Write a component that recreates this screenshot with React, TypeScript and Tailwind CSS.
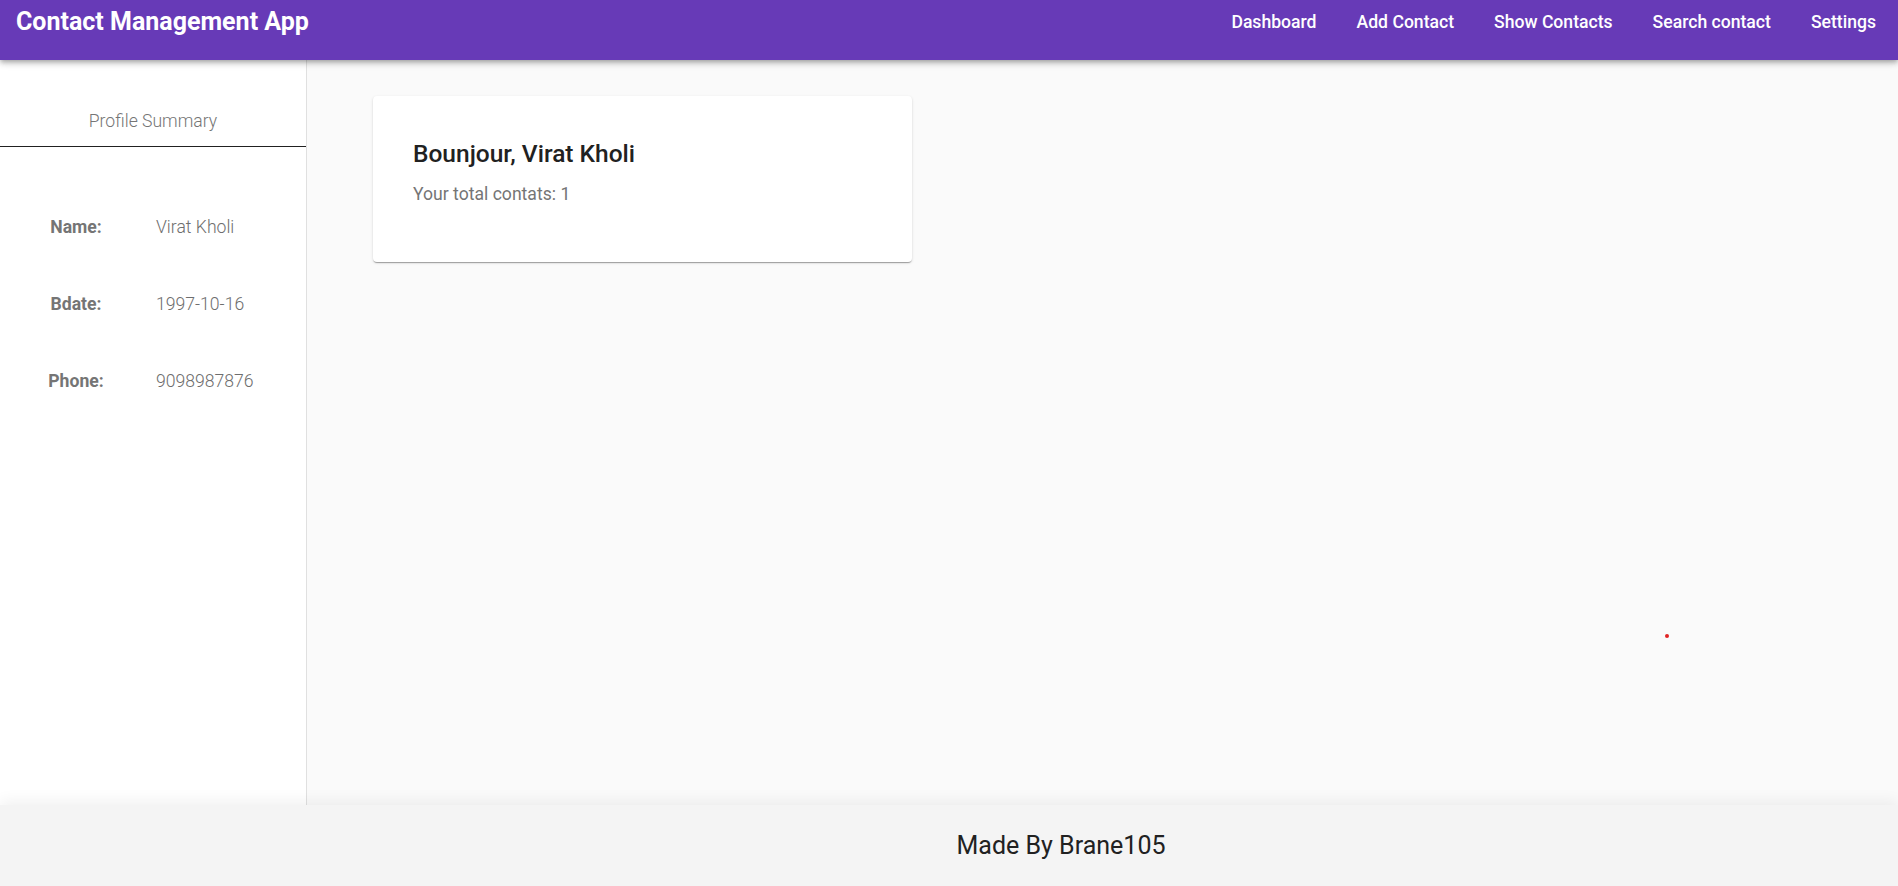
import React from "react";

const navItems = ["Dashboard", "Add Contact", "Show Contacts", "Search contact", "Settings"];

const rows: [string, string][] = [
  ["Name:", "Virat Kholi"],
  ["Bdate:", "1997-10-16"],
  ["Phone:", "9098987876"],
];

export default function App() {
  return (
    <div
      className="relative flex h-[886px] w-full flex-col overflow-hidden bg-[#fafafa]"
      style={{ fontFamily: "Roboto, 'Noto Sans', Arial, sans-serif" }}
    >
      <header className="relative z-20 flex h-[60px] shrink-0 items-start justify-between bg-[#673ab7] shadow-[0_2px_4px_-1px_rgba(0,0,0,0.2),0_4px_5px_0_rgba(0,0,0,0.14),0_1px_10px_0_rgba(0,0,0,0.12)]">
        <h1 className="pl-4 pt-[7px] text-[25px] font-bold leading-[30px] text-white">
          Contact Management App
        </h1>
        <nav className="flex gap-[40px] pr-[22px] pt-[10px]">
          {navItems.map((n) => (
            <a key={n} className="text-[17.6px] font-medium leading-[24px] text-white">
              {n}
            </a>
          ))}
        </nav>
      </header>

      <div className="flex min-h-0 flex-1">
        <aside className="w-[307px] shrink-0 border-r border-[#e0e0e0] bg-white">
          <div className="border-b border-[#212121] pb-[13px] pt-[49px] text-center text-[17.6px] font-light leading-[24px] text-[#757575]">
            Profile Summary
          </div>
          <div className="pt-[41px]">
            {rows.map(([k, v]) => (
              <div key={k} className="flex h-[77px] items-center">
                <div className="w-[152px] text-center text-[17.6px] font-bold leading-[24px] text-[#757575]">
                  {k}
                </div>
                <div className="pl-[4px] text-[17.6px] font-light leading-[24px] text-[#6e6e6e]">{v}</div>
              </div>
            ))}
          </div>
        </aside>

        <main className="flex-1 pl-[66px] pt-[36px]">
          <div className="h-[166px] w-[539px] rounded-[4px] bg-white pl-[40px] pt-[43px] shadow-[0_2px_1px_-1px_rgba(0,0,0,0.2),0_1px_1px_0_rgba(0,0,0,0.14),0_1px_3px_0_rgba(0,0,0,0.12)]">
            <div className="text-[24.5px] font-medium leading-[30px] text-[#212121]">Bounjour, Virat Kholi</div>
            <div className="mt-[13px] text-[17.6px] font-normal leading-[24px] text-[#757575]">
              Your total contats: 1
            </div>
          </div>
        </main>
      </div>

      <footer className="relative z-10 flex h-[81px] shrink-0 items-center justify-center bg-[#f4f4f4] pl-[224px] shadow-[0_-4px_14px_rgba(0,0,0,0.06)]">
        <span className="text-[25px] font-normal leading-[30px] text-[#212121]">Made By Brane105</span>
      </footer>

      <div className="absolute left-[1665px] top-[634px] h-[4px] w-[4px] rounded-full bg-[#e02424]" />
    </div>
  );
}
